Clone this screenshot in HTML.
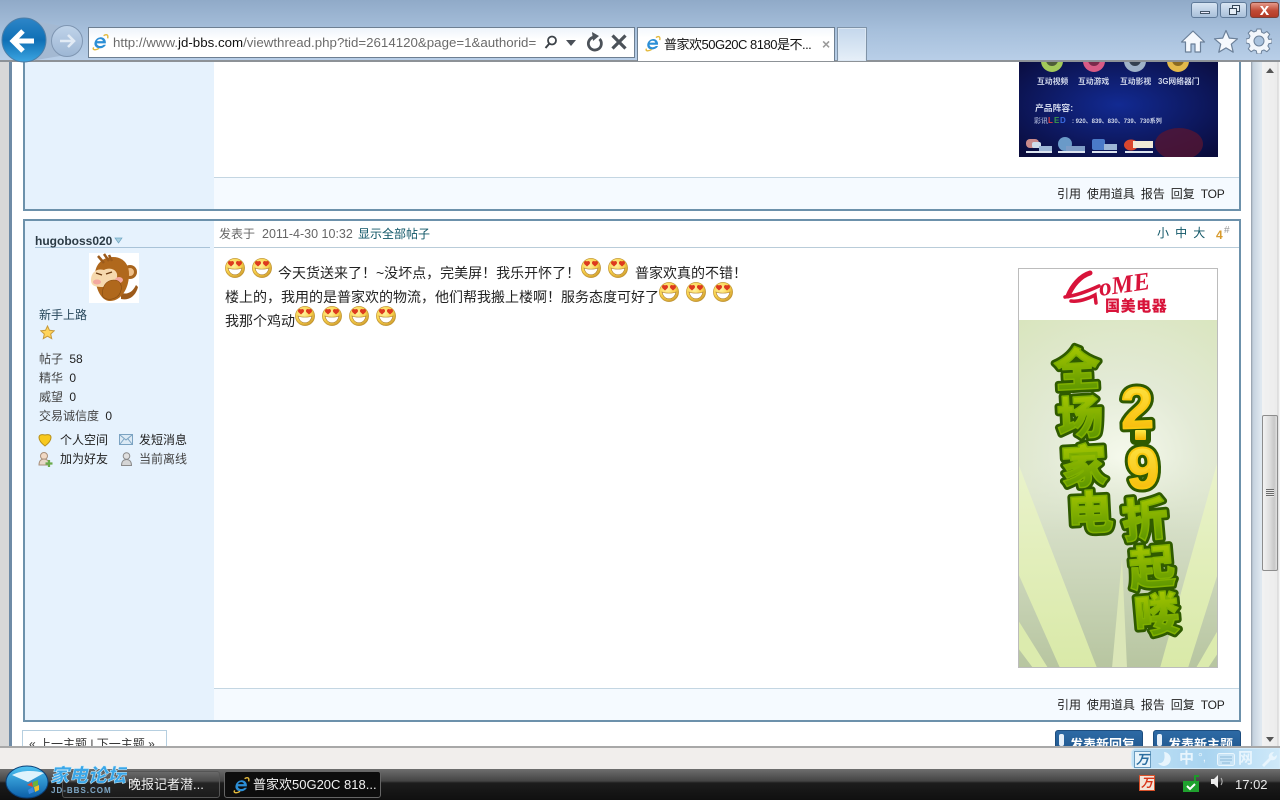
<!DOCTYPE html>
<html lang="zh"><head><meta charset="utf-8"><title>普家欢50G20C 8180是不...</title>
<style>
html,body{margin:0;padding:0;width:1280px;height:800px;overflow:hidden;background:#fff}
*{box-sizing:border-box}
body{font-family:"Liberation Sans","WenQuanYi Zen Hei","Noto Sans CJK SC",sans-serif;font-size:12px;color:#333}
.a{position:absolute;white-space:nowrap}
#chrome{position:absolute;left:0;top:0;width:1280px;height:62px;background:linear-gradient(#90aac8 0,#a6bfdb 30px,#b9cfe8 61px);border-bottom:2px solid #8d9297}
#content{position:absolute;left:0;top:62px;width:1280px;height:684px;overflow:hidden;background:#fff}
#status{position:absolute;left:0;top:746px;width:1280px;height:23px;background:#f1eeec;border-top:2px solid #a8a8a8}
#task{position:absolute;left:0;top:769px;width:1280px;height:31px;background:linear-gradient(#6e6e6e 0,#444 12px,#1c1c1c 14px,#101010 31px)}
.wb{position:absolute;top:2px;height:16px;border:1px solid #5f7a99;border-radius:3px;background:linear-gradient(#d8e5f3,#a9c0da)}
.t14{font-size:14px;color:#222;line-height:20px}
.sb{color:#444;font-size:12px;line-height:16px}
.n{color:#222}
</style></head><body>
<svg width="0" height="0" style="position:absolute"><defs>
<radialGradient id="yg" cx=".4" cy=".35" r=".7"><stop offset="0" stop-color="#fff3a0"/><stop offset=".6" stop-color="#f9d24d"/><stop offset="1" stop-color="#c9962a"/></radialGradient>
<symbol id="emo" viewBox="0 0 20 20"><circle cx="10" cy="10" r="9.6" fill="url(#yg)" stroke="#b98d2d" stroke-width=".6"/>
<path d="M6 3.500c-2-1.500-4 1-2.500 2.700L6 8.500l2.500-2.300C10 4.500 8 2 6 3.500zM14 3.500c-2-1.500-4 1-2.500 2.700L14 8.500l2.500-2.300C18 4.500 16 2 14 3.500z" fill="#dd3a1e"/>
<path d="M3 10c3 1.500 11 1.500 14 0-1 4.500-3.800 6.800-7 6.800S4 14.500 3 10z" fill="#fff" stroke="#a9792a" stroke-width=".6"/></symbol>
<symbol id="ie" viewBox="0 0 20 20"><path d="M16.500 11.500H6.500c.2 3 4.500 4 7.500 1.500h2.500c-2 4.500-9.500 5.500-12 1.500C2.500 11 5 5.500 10 4.800c4-.5 7 2.500 6.500 6.700zM6.700 9h6.500c-.2-2.800-5.500-3-6.500 0z" fill="#2c8fd6"/><path d="M3 16c-2 3 2 3.500 6 1M14 3c3-2 5.500-1.500 4.500 3" fill="none" stroke="#e3b93c" stroke-width="1.600"/></symbol>
</defs></svg>

<div id="content">
 <div class="a" style="left:0;top:0;width:9px;height:684px;background:#d8d8d8"></div>
 <div class="a" style="left:9px;top:0;width:3px;height:684px;background:#6f8ba6"></div>

 <!-- post 1 remainder -->
 <div class="a" style="left:23px;top:-2px;width:1218px;height:151px;border:2px solid #6c91ab;border-top:0;background:#fff"></div>
 <div class="a" style="left:25px;top:0;width:189px;height:147px;background:#e6f2fd"></div>
 <div class="a" style="left:214px;top:115px;width:1025px;height:32px;background:#f5faff;border-top:1px solid #c4d6e2"></div>
 <div class="a n" style="left:1057px;top:123px;word-spacing:2.600px">引用 使用道具 报告 回复 <span style="letter-spacing:-.25px">TOP</span></div>

 <!-- dark banner -->
 <svg class="a" style="left:1019px;top:0" width="199" height="95" viewBox="0 0 199 95">
  <defs><radialGradient id="nv" cx=".5" cy=".45" r=".7"><stop offset="0" stop-color="#122a92"/><stop offset="1" stop-color="#0a0c3c"/></radialGradient></defs>
  <rect width="199" height="95" fill="url(#nv)"/>
  <ellipse cx="160" cy="82" rx="24" ry="16" fill="#5a1530" opacity=".75"/>
  <circle cx="33" cy="-1" r="11" fill="#a3c95a"/><circle cx="33" cy="-2" r="6" fill="#4f5d38"/>
  <circle cx="75" cy="-1" r="11" fill="#d85b85"/><circle cx="75" cy="-2" r="6" fill="#7a2a4a"/>
  <circle cx="116" cy="-1" r="11" fill="#9fb2c8"/><circle cx="116" cy="-2" r="6" fill="#34404f"/>
  <circle cx="159" cy="-1" r="11" fill="#e3b94a"/><circle cx="159" cy="-2" r="6" fill="#8a6a22"/>
  <g font-size="7.800" fill="#cfd6ea" font-family="Liberation Sans,Noto Sans CJK SC,sans-serif" font-weight="700">
   <text x="18" y="22">互动视频</text><text x="59" y="22">互动游戏</text><text x="101" y="22">互动影视</text><text x="139" y="22">3G网络器门</text>
   <text x="16" y="49" font-size="8.800">产品阵容:</text>
   <text x="15" y="61" font-size="7" fill="#8f98c0">彩讯</text><text x="29" y="61" font-size="8" fill="#e04040">L</text><text x="35" y="61" font-size="8" fill="#3a9a4a">E</text><text x="41" y="61" font-size="8" fill="#3a6ae0">D</text>
   <text x="53" y="61" font-size="6">: 920、839、830、739、730系列</text>
  </g>
  <g>
   <rect x="7" y="77" width="13" height="9" fill="#c98a8a" rx="4"/><rect x="13" y="80" width="9" height="6" fill="#cfdcea" rx="2"/><rect x="20" y="84" width="13" height="5" fill="#9db6d6"/><rect x="7" y="89" width="26" height="2" fill="#dde5f0"/>
   <circle cx="46" cy="82" r="7" fill="#6a9ac8"/><rect x="47" y="84" width="19" height="5" fill="#7e9cc6"/><rect x="39" y="89" width="27" height="2" fill="#dde5f0"/>
   <rect x="73" y="77" width="13" height="11" fill="#4a7ac8" rx="2"/><rect x="85" y="82" width="13" height="6" fill="#9db6d6"/><rect x="73" y="89" width="25" height="2" fill="#dde5f0"/>
   <ellipse cx="112" cy="83" rx="7" ry="5.500" fill="#d8462e"/><rect x="114" y="79" width="20" height="7" fill="#f0ead8"/><rect x="106" y="89" width="28" height="2" fill="#dde5f0"/>
  </g>
 </svg>

 <!-- post 2 -->
 <div class="a" style="left:23px;top:157px;width:1218px;height:503px;border:2px solid #6c91ab;background:#fff"></div>
 <div class="a" style="left:25px;top:159px;width:189px;height:499px;background:#e6f2fd"></div>
 <div class="a" style="left:214px;top:185px;width:1025px;height:1px;background:#b9ccd9"></div>
 <div class="a" style="left:35px;top:185px;width:175px;height:1px;background:#a9c3d8"></div>
 <div class="a" style="left:214px;top:626px;width:1025px;height:32px;background:#f5faff;border-top:1px solid #c4d6e2"></div>
 <div class="a n" style="left:1057px;top:634px;word-spacing:2.600px">引用 使用道具 报告 回复 <span style="letter-spacing:-.25px">TOP</span></div>

 <div class="a" style="left:35px;top:172px;font-weight:700;color:#2b3a44">hugoboss020</div>
 <svg class="a" style="left:114px;top:175px" width="9" height="7"><path d="M1 1h7L4.500 6z" fill="#a8cfe0" stroke="#6fa6c2" stroke-width=".7"/></svg>

 <!-- avatar -->
 <svg class="a" style="left:89px;top:191px" width="50" height="50" viewBox="0 0 50 50">
  <rect width="50" height="50" fill="#fff"/>
  <path d="M32 40c8 2 12-2 15-8l2 2c-2 8-8 14-17 12z" fill="#9c5a1a"/>
  <circle cx="41" cy="19" r="7" fill="#a8641c"/><circle cx="41" cy="19" r="4" fill="#efbf87"/>
  <path d="M6 22C6 10 15 4 24 4s16 6 16 17c0 15-8 27-19 27C11 48 6 33 6 22z" fill="#b0681c"/>
  <path d="M9 3l6 7M15 1l5 7M20 2l3 6" stroke="#9c5a1a" stroke-width="2.500"/>
  <path d="M2 27c0-8 6-12 13-10 5-3 12-1 13 4 1 7-4 13-13 13S2 33 2 27z" fill="#f6d9ae"/>
  <path d="M7 20l6 2M17 21l6-2" stroke="#6c3a10" stroke-width="1.300"/>
  <ellipse cx="8" cy="29" rx="4" ry="2.500" fill="#f3a8a0"/><ellipse cx="30" cy="27" rx="4" ry="3" fill="#f3a8a0"/>
  <path d="M14 44c-2-10 3-17 11-17 7 0 9 7 6 13-2 5-11 9-17 4z" fill="#b0681c" stroke="#83490f" stroke-width=".6"/>
 </svg>

 <div class="a" style="left:39px;top:245px;color:#26465a;line-height:16px">新手上路</div>
 <svg class="a" style="left:40px;top:263px" width="15" height="15" viewBox="0 0 15 15"><path d="M7.500 1l2 4.300 4.700.5-3.500 3.200 1 4.600-4.200-2.400-4.200 2.400 1-4.600L.8 5.800l4.700-.5z" fill="#ffd45a" stroke="#c79a3a"/></svg>

 <div class="a sb" style="left:39px;top:289px">帖子 <span class="n" style="margin-left:3px">58</span></div>
 <div class="a sb" style="left:39px;top:308px">精华 <span class="n" style="margin-left:3px">0</span></div>
 <div class="a sb" style="left:39px;top:327px">威望 <span class="n" style="margin-left:3px">0</span></div>
 <div class="a sb" style="left:39px;top:346px">交易诚信度 <span class="n" style="margin-left:3px">0</span></div>

 <svg class="a" style="left:38px;top:371px" width="14" height="14" viewBox="0 0 14 14"><path d="M7 13C3 10 1 7.500 1 4.500 1 2 3 1 7 2c4-1 6 0 6 2.500C13 7.500 11 10 7 13z" fill="#f8c91e" stroke="#b68f1a"/></svg>
 <div class="a n" style="left:60px;top:370px;line-height:16px">个人空间</div>
 <svg class="a" style="left:119px;top:372px" width="14" height="12" viewBox="0 0 14 12"><rect x=".5" y=".5" width="13" height="10" fill="#dceaf5" stroke="#7ba3c2"/><path d="M1 1l6 5 6-5M1 10l4-5M13 10L9 5" stroke="#7ba3c2" fill="none"/></svg>
 <div class="a n" style="left:139px;top:370px;line-height:16px">发短消息</div>
 <svg class="a" style="left:38px;top:390px" width="15" height="16" viewBox="0 0 15 16"><circle cx="6" cy="4" r="3.500" fill="#f1d9c4" stroke="#a88f7a"/><path d="M1 13c0-4 2-6 5-6s5 2 5 6z" fill="#e8d8c8" stroke="#a88f7a"/><path d="M11 8v7M7.500 11.500h7" stroke="#6aaa4a" stroke-width="2.200"/></svg>
 <div class="a n" style="left:60px;top:389px;line-height:16px">加为好友</div>
 <svg class="a" style="left:120px;top:390px" width="13" height="15" viewBox="0 0 13 15"><circle cx="6.500" cy="4" r="3.300" fill="#dfdfdf" stroke="#8a8a8a"/><path d="M1.500 13.500c0-4 2-6 5-6s5 2 5 6z" fill="#d5d5d5" stroke="#8a8a8a"/></svg>
 <div class="a" style="left:139px;top:389px;line-height:16px;color:#444">当前离线</div>

 <!-- post header -->
 <div class="a" style="left:219px;top:164px;color:#666;line-height:16px">发表于</div>
 <div class="a" style="left:262px;top:164px;color:#666;line-height:16px;font-size:12.500px">2011-4-30 10:32</div>
 <div class="a" style="left:358px;top:164px;color:#0f5566;line-height:16px">显示全部帖子</div>
 <div class="a" style="left:1157px;top:163px;color:#0f5566;line-height:16px;word-spacing:2.800px">小 中 大</div>
 <div class="a" style="left:1216px;top:166px;color:#d79a2c;font-weight:700;line-height:14px">4</div>
 <div class="a" style="left:1224px;top:163px;color:#999;font-size:10px;line-height:12px">#</div>

 <!-- body -->
 <svg class="a" style="left:225px;top:196px" width="20" height="20"><use href="#emo"/></svg>
 <svg class="a" style="left:252px;top:196px" width="20" height="20"><use href="#emo"/></svg>
 <div class="a t14" style="left:278px;top:201px">今天货送来了&#xFF01;~没坏点&#xFF0C;完美屏&#xFF01;我乐开怀了&#xFF01;</div>
 <svg class="a" style="left:581px;top:196px" width="20" height="20"><use href="#emo"/></svg>
 <svg class="a" style="left:608px;top:196px" width="20" height="20"><use href="#emo"/></svg>
 <div class="a t14" style="left:635px;top:201px">普家欢真的不错&#xFF01;</div>
 <div class="a t14" style="left:225px;top:225px">楼上的&#xFF0C;我用的是普家欢的物流&#xFF0C;他们帮我搬上楼啊&#xFF01;服务态度可好了</div>
 <svg class="a" style="left:659px;top:220px" width="20" height="20"><use href="#emo"/></svg>
 <svg class="a" style="left:686px;top:220px" width="20" height="20"><use href="#emo"/></svg>
 <svg class="a" style="left:713px;top:220px" width="20" height="20"><use href="#emo"/></svg>
 <div class="a t14" style="left:225px;top:249px">我那个鸡动</div>
 <svg class="a" style="left:295px;top:244px" width="20" height="20"><use href="#emo"/></svg>
 <svg class="a" style="left:322px;top:244px" width="20" height="20"><use href="#emo"/></svg>
 <svg class="a" style="left:349px;top:244px" width="20" height="20"><use href="#emo"/></svg>
 <svg class="a" style="left:376px;top:244px" width="20" height="20"><use href="#emo"/></svg>

 <!-- GOME banner -->
 <svg class="a" style="left:1018px;top:206px" width="200" height="400" viewBox="0 0 200 400">
  <defs>
   <radialGradient id="gb" gradientUnits="userSpaceOnUse" cx="105" cy="190" r="170"><stop offset="0" stop-color="#f5f9ec"/><stop offset=".45" stop-color="#e3ead6"/><stop offset="1" stop-color="#d9e5be"/></radialGradient>
   <linearGradient id="gt" x1="0" y1="0" x2="0" y2="1"><stop offset="0" stop-color="#b8d400"/><stop offset="1" stop-color="#4e8c00"/></linearGradient>
   <linearGradient id="yt" x1="0" y1="0" x2="0" y2="1"><stop offset="0" stop-color="#ffe94a"/><stop offset="1" stop-color="#f5b400"/></linearGradient>
   <linearGradient id="dk" gradientUnits="userSpaceOnUse" x1="0" y1="190" x2="0" y2="400"><stop offset="0" stop-color="#e3ead6" stop-opacity="0"/><stop offset=".35" stop-color="#d5dec6"/><stop offset="1" stop-color="#b7c5a0"/></linearGradient>
   <linearGradient id="lt" gradientUnits="userSpaceOnUse" x1="0" y1="190" x2="0" y2="400"><stop offset="0" stop-color="#eaf3cc"/><stop offset="1" stop-color="#d9e9a8"/></linearGradient>
  </defs>
  <rect width="200" height="400" fill="#fff"/>
  <rect x="0" y="52" width="200" height="348" fill="url(#gb)"/>
  <path d="M0 195V400H200V192L105 170z" fill="url(#dk)"/>
  <!-- light rays -->
  <path d="M0 195L79 400H42L0 305z" fill="url(#lt)"/>
  <path d="M0 352L30 400H15L0 380z" fill="#dcebae"/>
  <path d="M200 192L142 400H170L200 305z" fill="url(#lt)"/>
  <path d="M200 362L178 400H190L200 385z" fill="#dcebae"/>
  <path d="M94 400H109L104 290z" fill="#dbe6b8"/>
  <rect x=".5" y=".5" width="199" height="399" fill="none" stroke="#bcbcbc"/>
  <!-- logo -->
  <path d="M72 5C62 8 54 18 50 28" fill="none" stroke="#d8133a" stroke-width="5" stroke-linecap="round"/>
  <path d="M47 29C56 28 68 24 81 18" fill="none" stroke="#d8133a" stroke-width="3.500" stroke-linecap="round"/>
  <path d="M53 33c7 1 17-2 24-6l1 8" fill="none" stroke="#d8133a" stroke-width="3.500" stroke-linecap="round"/>
  <text x="82" y="28" font-size="25" font-style="italic" font-weight="700" fill="#d8133a" font-family="Liberation Serif,serif" transform="rotate(-8 82 28)">oME</text>
  <text x="87" y="43" font-size="15" font-weight="900" fill="#d8133a" font-family="Noto Sans CJK SC,sans-serif" letter-spacing=".6">国美电器</text>
  <g font-family="Noto Sans CJK SC,sans-serif" font-weight="900" font-size="46" text-anchor="middle" stroke="#2f5a00" stroke-width="7" paint-order="stroke" stroke-linejoin="round" fill="#2f5a00">
   <text x="59" y="118" transform="rotate(-3 59 102)">全</text>
   <text x="62" y="166" transform="rotate(-3 62 150)">场</text>
   <text x="66" y="215" transform="rotate(-3 66 199)">家</text>
   <text x="72" y="261" transform="rotate(-3 72 245)">电</text>
   <text x="127" y="268" transform="rotate(-5 127 252)">折</text>
   <text x="134" y="316" transform="rotate(-5 134 300)">起</text>
   <text x="139" y="363" transform="rotate(-5 139 347)">喽</text>
  </g>
  <g font-family="Noto Sans CJK SC,sans-serif" font-weight="900" font-size="46" text-anchor="middle" stroke="#7fb000" stroke-width="1.500" stroke-linejoin="round" fill="url(#gt)">
   <text x="59" y="118" transform="rotate(-3 59 102)">全</text>
   <text x="62" y="166" transform="rotate(-3 62 150)">场</text>
   <text x="66" y="215" transform="rotate(-3 66 199)">家</text>
   <text x="72" y="261" transform="rotate(-3 72 245)">电</text>
   <text x="127" y="268" transform="rotate(-5 127 252)">折</text>
   <text x="134" y="316" transform="rotate(-5 134 300)">起</text>
   <text x="139" y="363" transform="rotate(-5 139 347)">喽</text>
  </g>
  <g font-family="Liberation Sans,sans-serif" font-weight="700" font-size="58" text-anchor="middle" stroke="#2f5a00" stroke-width="8" paint-order="stroke" stroke-linejoin="round" fill="#2f5a00">
   <text x="119" y="160" transform="rotate(-2 119 140)">2</text>
   <rect x="116" y="161" width="13" height="12" rx="1"/>
   <text x="125" y="220" transform="rotate(-2 125 200)">9</text>
  </g>
  <g font-family="Liberation Sans,sans-serif" font-weight="700" font-size="58" text-anchor="middle" stroke="#f8c810" stroke-width="2" stroke-linejoin="round" fill="url(#yt)">
   <text x="119" y="160" transform="rotate(-2 119 140)">2</text>
   <rect x="117" y="162" width="11" height="10" rx="1" stroke="none"/>
   <text x="125" y="220" transform="rotate(-2 125 200)">9</text>
  </g>
 </svg>

 <!-- prev/next & buttons -->
 <div class="a" style="left:22px;top:668px;width:145px;height:30px;border:1px solid #b6cfe0;background:#fff;padding:4px 0 0 6px;font-size:12px;color:#333">« 上一主题 | 下一主题 »</div>
 <div class="a" style="left:1055px;top:668px;width:88px;height:30px;background:linear-gradient(#2d6aa5,#1b4f85);border-radius:3px;border:1px solid #1d4d7e;color:#fff;font-weight:700;font-size:13px;padding:3px 0 0 14px">发表新回复</div>
 <div class="a" style="left:1059px;top:672px;width:5px;height:12px;background:#e6f0fa;border-radius:2px"></div>
 <div class="a" style="left:1153px;top:668px;width:88px;height:30px;background:linear-gradient(#2d6aa5,#1b4f85);border-radius:3px;border:1px solid #1d4d7e;color:#fff;font-weight:700;font-size:13px;padding:3px 0 0 14px">发表新主题</div>
 <div class="a" style="left:1157px;top:672px;width:5px;height:12px;background:#e6f0fa;border-radius:2px"></div>

 <!-- scrollbar -->
 <div class="a" style="left:1251px;top:0;width:11px;height:684px;background:linear-gradient(90deg,#8e9aa6 0,#c5d2de 2px,#dfe8f0 10px)"></div>
 <div class="a" style="left:1262px;top:0;width:18px;height:684px;background:linear-gradient(90deg,#f2f2f2,#ececec 15px,#cfcfcf 16px,#f4f4f4 17px)"></div>
 <div class="a" style="left:1262px;top:353px;width:16px;height:156px;border:1px solid #8d8d8d;border-radius:2px;background:linear-gradient(90deg,#f3f3f3,#dcdcdc 50%,#c8c8c8 80%,#e0e0e0)"></div>
 <div class="a" style="left:1266px;top:427px;width:8px;height:8px;background:repeating-linear-gradient(#6a6a6a 0,#6a6a6a 1px,#e8e8e8 1px,#e8e8e8 2px)"></div>
 <svg class="a" style="left:1265px;top:6px" width="10" height="6"><path d="M5 0l4 5H1z" fill="#555"/></svg>
 <svg class="a" style="left:1265px;top:674px" width="10" height="6"><path d="M5 6L1 1h8z" fill="#555"/></svg>
</div>

<div id="chrome">
 <div class="wb" style="left:1191px;width:27px"><div class="a" style="left:8px;top:8px;width:10px;height:3px;background:#eef;border:1px solid #456"></div></div>
 <div class="wb" style="left:1220px;width:27px"><div class="a" style="left:11px;top:2px;width:8px;height:7px;border:1px solid #345;background:#e6eef6"></div><div class="a" style="left:8px;top:5px;width:8px;height:7px;border:1px solid #345;background:#e6eef6"></div></div>
 <div class="wb" style="left:1250px;width:29px;background:linear-gradient(#e59a8a,#c04a35 55%,#b23a26);border-color:#7a4038"><div class="a" style="left:0;top:-2px;width:27px;text-align:center;color:#fff;font-weight:700;font-size:17px;line-height:18px">x</div></div>

 <!-- back/forward -->
 <svg class="a" style="left:0;top:17px" width="88" height="46" viewBox="0 0 88 46">
  <defs><linearGradient id="bk" x1="0" y1="0" x2="0" y2="1"><stop offset="0" stop-color="#2e86c8"/><stop offset=".5" stop-color="#0f6fb5"/><stop offset="1" stop-color="#3ca6e2"/></linearGradient>
  <linearGradient id="fw" x1="0" y1="0" x2="0" y2="1"><stop offset="0" stop-color="#c0d4ea"/><stop offset="1" stop-color="#9db6d4"/></linearGradient></defs>
  <path d="M30 3L66 10 66 38 30 44z" fill="#a4b9d2"/>
  <circle cx="67" cy="24" r="15.500" fill="url(#fw)" stroke="#7f96b2"/>
  <path d="M60 24h13M68 18l6 6-6 6" fill="none" stroke="#e2ebf5" stroke-width="2.600"/>
  <circle cx="24" cy="23" r="22" fill="url(#bk)" stroke="#4c7ea8"/>
  <path d="M14 24h20M23 14l-10 10 10 10" fill="none" stroke="#fff" stroke-width="5"/>
 </svg>

 <!-- address bar -->
 <div class="a" style="left:88px;top:27px;width:547px;height:31px;background:linear-gradient(#eef4fb,#fff 40%);border:1px solid #6d7f92"></div>
 <svg class="a" style="left:91px;top:33px" width="18" height="18"><use href="#ie"/></svg>
 <div class="a" style="left:113px;top:34px;font-size:13.300px;line-height:17px;color:#6b6b6b;width:430px;overflow:hidden">http://www.<span style="color:#111">jd-bbs.com</span>/viewthread.php?tid=2614120&amp;page=1&amp;authorid=</div>
 <svg class="a" style="left:543px;top:34px" width="16" height="16" viewBox="0 0 16 16"><circle cx="9" cy="6.500" r="4" fill="none" stroke="#3c4248" stroke-width="1.800"/><path d="M6 10l-3.500 4" stroke="#3c4248" stroke-width="2"/></svg>
 <svg class="a" style="left:566px;top:40px" width="11" height="7"><path d="M0 0h10L5 6z" fill="#4a5058"/></svg>
 <svg class="a" style="left:585px;top:31px" width="20" height="22" viewBox="0 0 20 22"><path d="M14.500 8a6.500 6.500 0 1 1-6-1.800" fill="none" stroke="#4c5259" stroke-width="2.800"/><path d="M7 1l7 4-6 5z" fill="#4c5259"/></svg>
 <svg class="a" style="left:610px;top:33px" width="18" height="18" viewBox="0 0 18 18"><path d="M2.500 2.500l13 13M15.500 2.500l-13 13" stroke="#4c5259" stroke-width="3.200"/></svg>

 <!-- tabs -->
 <div class="a" style="left:637px;top:27px;width:198px;height:34px;background:linear-gradient(#f4f8fd,#fff 30%);border:1px solid #6d7f92;border-bottom:0"></div>
 <svg class="a" style="left:644px;top:35px" width="17" height="17"><use href="#ie"/></svg>
 <div class="a" style="left:664px;top:36px;font-size:13px;line-height:17px;color:#111;letter-spacing:-.5px">普家欢50G20C 8180是不...</div>
 <div class="a" style="left:822px;top:35px;color:#9a9a9a;font-size:14px;font-weight:700;line-height:18px">×</div>
 <div class="a" style="left:837px;top:27px;width:30px;height:34px;background:linear-gradient(#c4d7ec,#e6eff8);border:1px solid #7f93a8;border-bottom:0;box-shadow:inset 0 0 0 1px #dbe7f3"></div>

 <!-- toolbar icons -->
 <svg class="a" style="left:1180px;top:29px" width="26" height="25" viewBox="0 0 26 25"><path d="M13 2L1.500 13h4v10h5.500v-8h4v8h5.500V13h4z" fill="#f6f9fd" stroke="#6b8099" stroke-width="1.200" stroke-linejoin="round"/></svg>
 <svg class="a" style="left:1213px;top:29px" width="26" height="25" viewBox="0 0 26 25"><path d="M13 1.500l3.300 7.600 8.200.7-6.200 5.400 1.900 8-7.200-4.300-7.200 4.300 1.900-8L1.500 9.800l8.200-.7z" fill="#f6f9fd" stroke="#6b8099" stroke-width="1.200" stroke-linejoin="round"/></svg>
 <svg class="a" style="left:1246px;top:28px" width="26" height="26" viewBox="0 0 26 26"><path d="M11 1h4l.7 3.300 2.300 1 2.900-1.800 2.800 2.800-1.800 2.900 1 2.300L26 11v4l-3.100.7-1 2.300 1.800 2.900-2.800 2.800-2.900-1.800-2.300 1L15 26h-4l-.7-3.100-2.300-1-2.900 1.800-2.800-2.800L4 18l-1-2.300L0 15v-4l3-.7 1-2.300-1.800-2.900L5 2.300 7.900 4l2.400-1z" fill="#f2f6fb" stroke="#6b8099"/><circle cx="13" cy="13" r="5" fill="#a9c2dd" stroke="#6b8099"/></svg>
</div>

<div id="status">
 <div class="a" style="left:1131px;top:0;width:149px;height:21px;background:linear-gradient(90deg,#bfe0f5,#a9d4f0 50%,#cfe9f9);border-radius:5px 0 0 5px;border:1px solid #d4ecfa"></div>
 <div class="a" style="left:1134px;top:3px;width:17px;height:17px;background:#e8f4fb;border:1px solid #6a9cc0;color:#2b6ea0;font-size:13px;font-weight:700;line-height:15px;text-align:center;font-style:italic">万</div>
 <svg class="a" style="left:1157px;top:3px" width="16" height="16" viewBox="0 0 16 16"><path d="M7 1a7 7 0 1 1-6 11c4 1 8-2 6-11z" fill="#e8f5fd"/></svg>
 <div class="a" style="left:1179px;top:2px;color:#e8f5fd;font-size:15px;font-weight:700;line-height:18px">中</div>
 <div class="a" style="left:1198px;top:1px;color:#e8f5fd;font-size:12px;line-height:16px">°,</div>
 <svg class="a" style="left:1217px;top:5px" width="18" height="13"><rect x=".5" y=".5" width="17" height="12" rx="2" fill="#c8e4f6" stroke="#eaf6fd"/><path d="M3 4h12M3 7h12M5 10h8" stroke="#8ab8d8"/></svg>
 <div class="a" style="left:1238px;top:2px;color:#e8f5fd;font-size:15px;font-weight:700;line-height:18px">网</div>
 <svg class="a" style="left:1260px;top:2px" width="17" height="17" viewBox="0 0 17 17"><path d="M2 15l7-7c-1-3 1-6 5-6l-2 3 2 2 3-2c0 4-3 6-6 5l-7 7z" fill="#e8f5fd"/></svg>
</div>

<div id="task">
 <div class="a" style="left:62px;top:2px;width:158px;height:27px;border:1px solid #555;border-radius:3px;background:rgba(255,255,255,.04)"></div>
 <div class="a" style="left:128px;top:8px;color:#eee;font-size:13px;line-height:16px">晚报记者潜...</div>
 <div class="a" style="left:224px;top:2px;width:157px;height:27px;border:1px solid #666;border-radius:3px;background:#0d0d0d"></div>
 <svg class="a" style="left:232px;top:7px" width="18" height="18"><use href="#ie"/></svg>
 <div class="a" style="left:253px;top:8px;color:#f2f2f2;font-size:13px;line-height:16px">普家欢50G20C 818...</div>

 <!-- logo -->
 <svg class="a" style="left:5px;top:-6px" width="122" height="37" viewBox="0 0 122 37">
  <defs><linearGradient id="lb" x1="0" y1="0" x2="0" y2="1"><stop offset="0" stop-color="#4fc3f2"/><stop offset="1" stop-color="#0b5ea8"/></linearGradient></defs>
  <ellipse cx="22" cy="19" rx="21" ry="16" fill="url(#lb)" stroke="#0a3f78"/>
  <path d="M7 12c9-5 22-5 32-2L23 19z" fill="#dff3fc"/>
  <path d="M22 22l5-3 1 5z" fill="#e04a2a"/><path d="M28 19l5-2 0 5-5 2z" fill="#6ab43a"/><path d="M23 27l5-3 1 5-5 2z" fill="#3a8ae0"/><path d="M29 24l5-2 0 5-4 2z" fill="#f0c02a"/>
  <text x="45" y="19" font-size="19" font-weight="900" font-style="italic" fill="#3aa6e8" stroke="#cfeefc" stroke-width=".5" font-family="Noto Sans CJK SC,sans-serif">家电论坛</text>
  <text x="46" y="30" font-size="8" font-weight="700" fill="#7fa9c8" letter-spacing="1" font-family="Liberation Sans,sans-serif">JD-BBS.COM</text>
 </svg>

 <!-- tray -->
 <div class="a" style="left:1139px;top:6px;width:16px;height:16px;background:#f3e4d8;border:1px solid #d8512a;color:#d8351a;font-size:12px;font-weight:700;line-height:14px;text-align:center;font-style:italic">万</div>
 <svg class="a" style="left:1183px;top:4px" width="17" height="19" viewBox="0 0 17 19"><path d="M1 9h11V3h4" fill="none" stroke="#1d9a2a" stroke-width="2"/><rect x="0" y="8" width="16" height="11" fill="#1fa12e"/><path d="M4 13l3 3 5-5" stroke="#fff" stroke-width="2" fill="none"/></svg>
 <svg class="a" style="left:1211px;top:5px" width="14" height="15" viewBox="0 0 14 15"><path d="M0 5h3l4-4v13l-4-4H0z" fill="#eee"/><path d="M10 4c1.500 2 1.500 5 0 7" stroke="#bbb" fill="none"/></svg>
 <div class="a" style="left:1235px;top:8px;color:#e8e8e8;font-size:13px;line-height:16px">17:02</div>
</div>
</body></html>
